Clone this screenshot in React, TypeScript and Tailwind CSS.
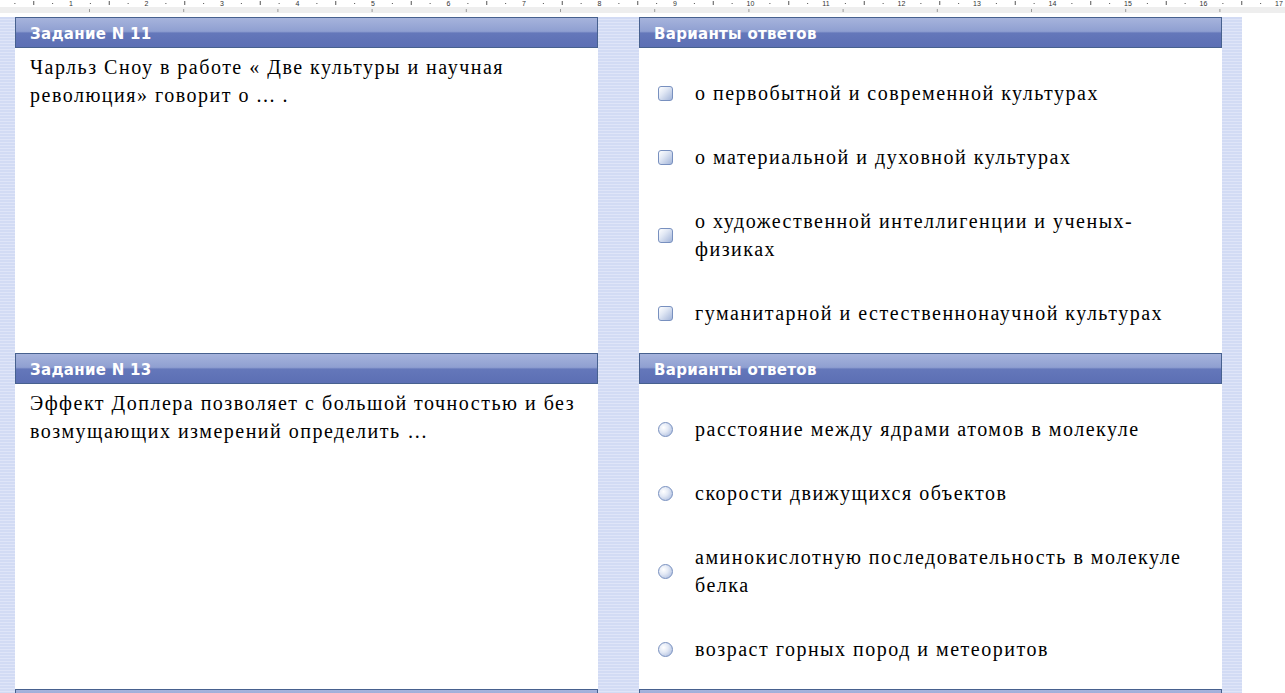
import React from "react";

const serif = { fontFamily: '"Liberation Serif", "Times New Roman", serif' };

function Ruler() {
  const unit = 75.5;
  const nums = Array.from({ length: 17 }, (_, i) => i + 1);
  const quarters = Array.from({ length: 70 }, (_, i) => i);
  const lower = Array.from({ length: 14 }, (_, i) => 89 + i * 94.2);
  return (
    <svg width="1285" height="17" className="block shrink-0">
      <rect x="0" y="0" width="1285" height="17" fill="#ffffff" />
      <rect x="0" y="7" width="1285" height="6" fill="#eeeeee" />
      {quarters.map((q) => {
        const x = -4.5 + q * (unit / 4);
        if (q % 4 === 0) return null;
        const half = q % 2 === 0;
        return (
          <rect
            key={q}
            x={x}
            y={half ? 1 : 3}
            width="1"
            height={half ? 4 : 1}
            fill="#555"
          />
        );
      })}
      {nums.map((n) => (
        <text
          key={n}
          x={-4.5 + n * unit}
          y="6"
          fontSize="7"
          textAnchor="middle"
          fill="#333"
          style={{ fontFamily: '"Liberation Sans", Arial, sans-serif' }}
        >
          {n}
        </text>
      ))}
      {lower.map((x, i) => (
        <rect key={i} x={x} y="9" width="1" height="3" fill="#999" />
      ))}
    </svg>
  );
}

function Header({ title }: { title?: string }) {
  return (
    <div className="h-[31px] shrink-0 border border-[#47618f] bg-[linear-gradient(to_bottom,#a6b3dc_0%,#8f9fd1_46%,#6477ba_52%,#5c6fb4_100%)] flex items-center pl-[14px] pt-[3px]">
      {title ? (
        <span
          className="text-white font-bold text-[15px] tracking-[0.3px] leading-none"
          style={{ fontFamily: '"DejaVu Sans", Verdana, sans-serif' }}
        >
          {title}
        </span>
      ) : null}
    </div>
  );
}

function CheckIcon() {
  return (
    <span className="w-[15px] h-[15px] shrink-0 rounded-[3px] border border-[#7890bf] bg-[linear-gradient(135deg,#ffffff_0%,#e0e7f4_40%,#a3b5d9_100%)]" />
  );
}

function RadioIcon() {
  return (
    <span className="w-[15px] h-[15px] shrink-0 rounded-full border border-[#7890bf] bg-[radial-gradient(circle_at_35%_35%,#ffffff_0%,#e3e9f5_40%,#a0b3da_100%)]" />
  );
}

function Question({ title, text }: { title?: string; text: string }) {
  return (
    <div className="flex flex-col">
      <Header title={title} />
      <div className="h-[305px] bg-white pl-[15px] pr-[16px] pt-[5px]">
        <p
          className="text-[20px] leading-[28px] tracking-[1.5px] text-black"
          style={serif}
        >
          {text}
        </p>
      </div>
    </div>
  );
}

function Answers({
  title,
  kind,
  items,
}: {
  title?: string;
  kind: "check" | "radio";
  items: string[];
}) {
  return (
    <div className="flex flex-col">
      <Header title={title} />
      <div className="h-[305px] bg-white pt-[31px] pl-[19px] pr-[26px] flex flex-col gap-[36px]">
        {items.map((t) => (
          <div key={t} className="flex items-center gap-[22px]">
            {kind === "check" ? <CheckIcon /> : <RadioIcon />}
            <span
              className="text-[20px] leading-[28px] tracking-[1.5px] text-black"
              style={serif}
            >
              {t}
            </span>
          </div>
        ))}
      </div>
    </div>
  );
}

export default function App() {
  return (
    <div className="w-[1285px] h-[693px] overflow-hidden bg-white flex flex-col">
      <Ruler />
      <div className="flex">
        <div className="w-[1242px] bg-[repeating-linear-gradient(to_bottom,#d2dbf4_0px,#d2dbf4_2px,#dfe5f8_2px,#dfe5f8_3px)] pl-[15px] pr-[20px] grid grid-cols-[583px_583px] gap-x-[41px]">
          <Question
            title="Задание N 11"
            text="Чарльз Сноу в работе « Две культуры и научная революция» говорит о ... ."
          />
          <Answers
            title="Варианты ответов"
            kind="check"
            items={[
              "о первобытной и современной культурах",
              "о материальной и духовной культурах",
              "о художественной интеллигенции и ученых-физиках",
              "гуманитарной и естественнонаучной культурах",
            ]}
          />
          <Question
            title="Задание N 13"
            text="Эффект Доплера позволяет с большой точностью и без возмущающих измерений определить …"
          />
          <Answers
            title="Варианты ответов"
            kind="radio"
            items={[
              "расстояние между ядрами атомов в молекуле",
              "скорости движущихся объектов",
              "аминокислотную последовательность в молекуле белка",
              "возраст горных пород и метеоритов",
            ]}
          />
          <Question text="" />
          <Answers kind="radio" items={[]} />
        </div>
        <div className="flex-1 bg-white" />
      </div>
    </div>
  );
}
